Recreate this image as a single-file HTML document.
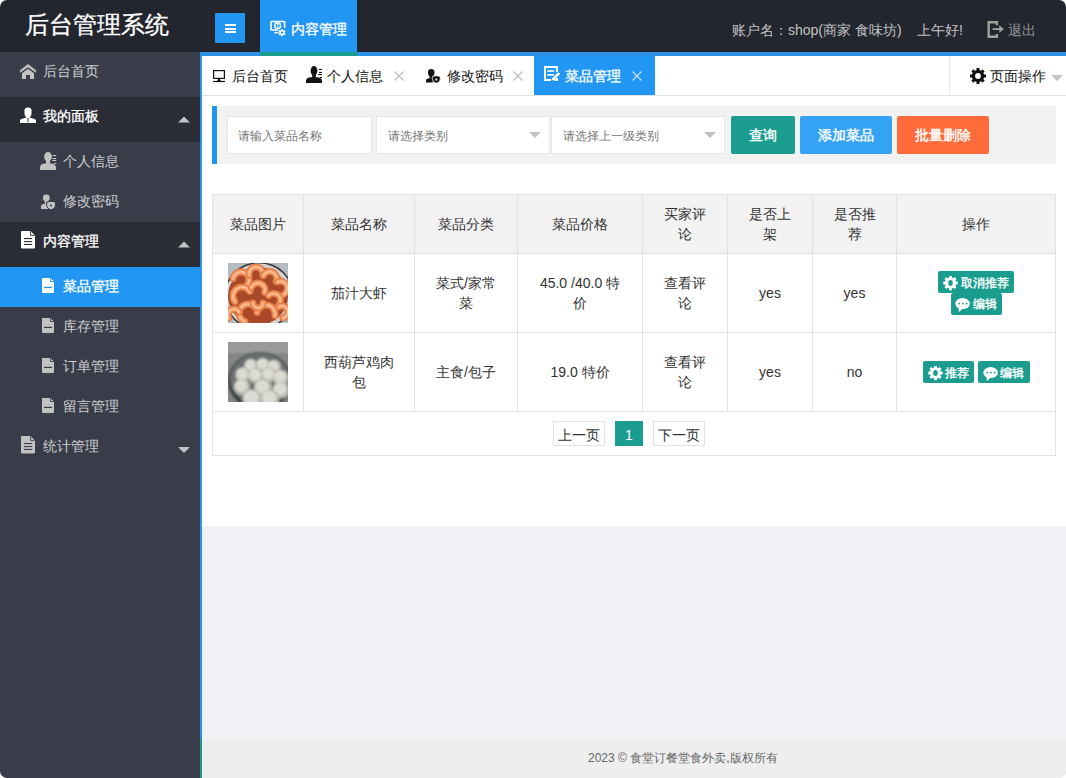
<!DOCTYPE html>
<html><head><meta charset="utf-8">
<style>
*{box-sizing:border-box;margin:0;padding:0}
html,body{width:1066px;height:778px;overflow:hidden;background:#fff;font-family:"Liberation Sans",sans-serif}
.app{position:absolute;left:0;top:0;width:1066px;height:778px;border-radius:7px;overflow:hidden;background:#fff}
.abs{position:absolute}
.t{position:absolute;white-space:nowrap;line-height:20px}
svg{position:absolute;display:block}
/* header */
#hdr{left:0;top:0;width:1066px;height:52px;background:#23262E}
#logo{left:25px;top:10px;font-size:24px;line-height:30px;color:#fff;-webkit-text-stroke:0.3px #fff}
#ham{left:215px;top:13px;width:30px;height:30px;background:#2196F3}
#htab{left:260px;top:0;width:97px;height:56px;background:#2196F3;border-bottom:4px solid #1A9D8F}
/* sidebar */
#side{left:0;top:52px;width:200px;height:726px;background:#393D49}
.grp{position:absolute;left:0;width:200px;height:45px;background:#2A2D35}
.sel{position:absolute;left:0;width:200px;height:40px;background:#2196F3}
.st{position:absolute;font-size:14px;line-height:20px;white-space:nowrap;color:rgba(255,255,255,.75)}
.sw{color:#fff;-webkit-text-stroke:0.3px #fff}
/* main */
#main{left:200px;top:52px;width:866px;height:726px;background:#F0F1F5;border-left:2px solid #2D93E6;border-top:4px solid #2D93E6}
#tabbar{left:202px;top:56px;width:864px;height:40px;background:#fff;border-bottom:1px solid #e2e2e2}
#atab{left:534px;top:56px;width:121px;height:39px;background:#2196F3}
.tt{position:absolute;font-size:14px;line-height:20px;white-space:nowrap;color:#111}
#content{left:202px;top:96px;width:864px;height:430px;background:#fff}
#search{left:212px;top:106px;width:844px;height:58px;background:#f2f2f2;border-left:5px solid #2196F3}
.inp{position:absolute;top:116px;height:38px;background:#fff;border:1px solid #e6e6e6}
.ph{position:absolute;font-size:12px;line-height:20px;color:#757575;white-space:nowrap}
.btn{position:absolute;top:116px;height:38px;border-radius:2px;color:#fff;font-size:14px;line-height:38px;text-align:center;white-space:nowrap;-webkit-text-stroke:0.4px #fff}
/* table */
#tbl{left:212px;top:194px;width:844px;height:262px;border:1px solid #e2e2e2;background:#fff}
#thead{left:213px;top:195px;width:842px;height:58px;background:#f2f2f2}
.hl{position:absolute;height:1px;background:#e2e2e2}
.vl{position:absolute;width:1px;background:#e2e2e2}
.c{position:absolute;font-size:14px;line-height:20px;color:#333;text-align:center;white-space:nowrap}
.xb{position:absolute;height:22px;background:#1A9D8F;border-radius:2px;color:#fff;font-size:12px;line-height:22px;white-space:nowrap}
.pg{position:absolute;top:421px;height:25px;border:1px solid #e2e2e2;background:#fff;font-size:14px;line-height:26px;text-align:center;color:#333;overflow:hidden}
#foot{left:202px;top:738px;width:864px;height:40px;background:#eee}
</style></head><body>
<div class="app">
<!-- header -->
<div id="hdr" class="abs"></div>
<div id="logo" class="abs">后台管理系统</div>
<div id="ham" class="abs"></div>
<div id="htab" class="abs"></div>
<div class="t" style="left:291px;top:19px;font-size:14px;color:#fff;-webkit-text-stroke:0.3px #fff">内容管理</div>
<div class="t" style="left:732px;top:20px;font-size:14px;color:#c2c2c2">账户名：shop(商家 食味坊)</div>
<div class="t" style="left:917px;top:20px;font-size:14px;color:#c2c2c2">上午好!</div>
<div class="t" style="left:1008px;top:20px;font-size:14px;color:#999">退出</div>

<!-- sidebar -->
<div id="side" class="abs"></div>
<div class="grp" style="top:97px"></div>
<div class="grp" style="top:222px"></div>
<div class="sel" style="top:267px"></div>
<div class="st" style="left:43px;top:61px">后台首页</div>
<div class="st sw" style="left:43px;top:106px">我的面板</div>
<div class="st" style="left:63px;top:151px">个人信息</div>
<div class="st" style="left:63px;top:191px">修改密码</div>
<div class="st sw" style="left:43px;top:231px">内容管理</div>
<div class="st sw" style="left:63px;top:276px">菜品管理</div>
<div class="st" style="left:63px;top:316px">库存管理</div>
<div class="st" style="left:63px;top:356px">订单管理</div>
<div class="st" style="left:63px;top:396px">留言管理</div>
<div class="st" style="left:43px;top:436px">统计管理</div>

<!-- main -->
<div id="main" class="abs"></div>
<div id="tealline" class="abs" style="left:260px;top:52px;width:97px;height:4px;background:#1A9D8F"></div>
<div id="tabbar" class="abs"></div>
<div class="abs" style="left:949px;top:56px;width:1px;height:39px;background:#e6e6e6"></div>
<div id="atab" class="abs"></div>
<div class="tt" style="left:232px;top:66px">后台首页</div>
<div class="tt" style="left:327px;top:66px">个人信息</div>
<div class="tt" style="left:447px;top:66px">修改密码</div>
<div class="tt" style="left:565px;top:66px;color:#fff;-webkit-text-stroke:0.3px #fff">菜品管理</div>
<div class="tt" style="left:990px;top:66px">页面操作</div>

<div id="content" class="abs"></div>
<div id="search" class="abs"></div>
<div class="inp" style="left:227px;width:145px"></div>
<div class="inp" style="left:376px;width:174px"></div>
<div class="inp" style="left:551px;width:174px"></div>
<div class="ph" style="left:238px;top:126px">请输入菜品名称</div>
<div class="ph" style="left:388px;top:126px">请选择类别</div>
<div class="ph" style="left:563px;top:126px">请选择上一级类别</div>
<div class="btn" style="left:731px;width:64px;background:#1A9D8F">查询</div>
<div class="btn" style="left:800px;width:92px;background:#35A3F5">添加菜品</div>
<div class="btn" style="left:897px;width:92px;background:#FF6B3B">批量删除</div>

<!-- table -->
<div id="tbl" class="abs"></div>
<div id="thead" class="abs"></div>
<div class="hl" style="left:213px;top:253px;width:842px"></div>
<div class="hl" style="left:213px;top:332px;width:842px"></div>
<div class="hl" style="left:213px;top:411px;width:842px"></div>
<div class="vl" style="left:303px;top:195px;height:216px"></div>
<div class="vl" style="left:414px;top:195px;height:216px"></div>
<div class="vl" style="left:517px;top:195px;height:216px"></div>
<div class="vl" style="left:642px;top:195px;height:216px"></div>
<div class="vl" style="left:727px;top:195px;height:216px"></div>
<div class="vl" style="left:812px;top:195px;height:216px"></div>
<div class="vl" style="left:896px;top:195px;height:216px"></div>

<div class="c" style="left:213px;width:90px;top:214px">菜品图片</div>
<div class="c" style="left:304px;width:110px;top:214px">菜品名称</div>
<div class="c" style="left:415px;width:102px;top:214px">菜品分类</div>
<div class="c" style="left:518px;width:124px;top:214px">菜品价格</div>
<div class="c" style="left:643px;width:84px;top:204px">买家评<br>论</div>
<div class="c" style="left:728px;width:84px;top:204px">是否上<br>架</div>
<div class="c" style="left:813px;width:83px;top:204px">是否推<br>荐</div>
<div class="c" style="left:897px;width:158px;top:214px">操作</div>

<div class="c" style="left:304px;width:110px;top:283px">茄汁大虾</div>
<div class="c" style="left:415px;width:102px;top:273px">菜式/家常<br>菜</div>
<div class="c" style="left:518px;width:124px;top:273px">45.0 /40.0 特<br>价</div>
<div class="c" style="left:643px;width:84px;top:273px">查看评<br>论</div>
<div class="c" style="left:728px;width:84px;top:283px">yes</div>
<div class="c" style="left:813px;width:83px;top:283px">yes</div>
<div class="xb" style="left:938px;top:271px;width:76px"></div>
<div class="xb" style="left:951px;top:293px;width:51px"></div>

<div class="c" style="left:304px;width:110px;top:352px">西葫芦鸡肉<br>包</div>
<div class="c" style="left:415px;width:102px;top:362px">主食/包子</div>
<div class="c" style="left:518px;width:124px;top:362px">19.0 特价</div>
<div class="c" style="left:643px;width:84px;top:352px">查看评<br>论</div>
<div class="c" style="left:728px;width:84px;top:362px">yes</div>
<div class="c" style="left:813px;width:83px;top:362px">no</div>
<div class="xb" style="left:923px;top:361px;width:51px"></div>
<div class="xb" style="left:978px;top:361px;width:52px"></div>

<div class="pg" style="left:553px;width:52px">上一页</div>
<div class="pg" style="left:615px;width:28px;background:#1A9D8F;border-color:#1A9D8F;color:#fff">1</div>
<div class="pg" style="left:653px;width:52px">下一页</div>

<div id="foot" class="abs"></div>
<div class="abs" style="left:200px;top:738px;width:2px;height:40px;background:#1A9D8F"></div>
<div class="t" style="left:588px;top:748px;font-size:12px;color:#666">2023 © 食堂订餐堂食外卖,版权所有</div>

<!-- ICONS -->
<svg style="left:225px;top:24px" width="11" height="9"><rect x="0" y="0" width="11" height="2" fill="#fff"/><rect x="0" y="4" width="11" height="2" fill="#fff"/><rect x="0" y="7" width="11" height="2" fill="#fff"/></svg>
<svg style="left:270px;top:20px" width="17" height="17"><path d="M8.3 10 L1.8 10 Q1 10 1 9.2 L1 2.3 Q1 1.5 1.8 1.5 L13.8 1.5 Q14.6 1.5 14.6 2.3 L14.6 8" fill="none" stroke="#fff" stroke-width="1.6"/><circle cx="7.6" cy="5.7" r="2.9" fill="none" stroke="#fff" stroke-width="1.4"/><path d="M8.3 3.4 Q6.4 5.7 8.3 8" fill="none" stroke="#fff" stroke-width="1"/><line x1="4.2" y1="12.6" x2="8.4" y2="12.6" stroke="#fff" stroke-width="1.4"/><path d="M11.20 9.92 L11.20 8.90 L12.80 8.90 L12.80 9.92 L13.92 10.57 L14.80 10.06 L15.60 11.44 L14.72 11.95 L14.72 13.25 L15.60 13.76 L14.80 15.14 L13.92 14.63 L12.80 15.28 L12.80 16.30 L11.20 16.30 L11.20 15.28 L10.08 14.63 L9.20 15.14 L8.40 13.76 L9.28 13.25 L9.28 11.95 L8.40 11.44 L9.20 10.06 L10.08 10.57 Z M13.20 12.60 A1.2 1.2 0 1 0 10.80 12.60 A1.2 1.2 0 1 0 13.20 12.60 Z" fill="#fff" fill-rule="evenodd"/></svg>
<svg style="left:987px;top:21px" width="18" height="17"><path d="M9.9 4.3 L9.9 1.2 L1.7 1.2 L1.7 15.8 L9.9 15.8 L9.9 12.9" fill="none" stroke="#a0a0a0" stroke-width="2.4"/><rect x="5.6" y="7.1" width="7.5" height="1.9" fill="#a0a0a0"/><path d="M12.3 4.3 L16.9 8.05 L12.3 12.1 Z" fill="#a0a0a0"/></svg>

<svg style="left:20px;top:64px" width="16" height="15"><path d="M0 6.3 L8 0 L16 6.3 L16 8.8 L8 3.3 L0 8.8 Z M2 9.3 L8 4.7 L14 9.3 L14 15 L10 15 L10 11 L6 11 L6 15 L2 15 Z" fill="#c2c2c2"/></svg>
<svg style="left:20px;top:107px" width="16" height="17"><path d="M4.4 3.8 Q4.4 0.4 8 0.4 Q11.6 0.4 11.6 3.8 L11.4 7.6 Q11 9.6 9.6 10.4 L9.6 11 L6.4 11 L6.4 10.4 Q5 9.6 4.6 7.6 Z" fill="#fff"/><path d="M0 16 L0 13.6 Q0 12.4 2 11.8 L6.6 10.6 L8 12 L9.4 10.6 L14 11.8 Q16 12.4 16 13.6 L16 16 Z" fill="#fff"/><path d="M8 11.5 L8 15.5" stroke="#2A2D35" stroke-width="0.9"/></svg>
<svg style="left:40px;top:152px" width="17" height="18"><ellipse cx="8" cy="4.7" rx="3.9" ry="4.7" fill="#c2c2c2"/><rect x="6" y="8" width="4" height="4" fill="#c2c2c2"/><path d="M0 18 L0 15.5 Q0 11.6 5 11.4 L11 11.4 Q16 11.6 16 15.5 L16 18 Z" fill="#c2c2c2"/><rect x="12.6" y="3" width="3.6" height="1.1" fill="#c2c2c2"/><rect x="12.6" y="6" width="3.6" height="1.1" fill="#c2c2c2"/><rect x="12.1" y="8" width="4.1" height="1.1" fill="#c2c2c2"/><rect x="14" y="10.9" width="2.2" height="1.1" fill="#c2c2c2"/></svg>
<svg style="left:40px;top:194px" width="17" height="17"><ellipse cx="6.3" cy="3.9" rx="3.4" ry="3.3" fill="#c2c2c2"/><rect x="4.8" y="6" width="3" height="4" fill="#c2c2c2"/><path d="M1 15 L1 12.5 Q1 10.3 4 10 L8.5 10 L8.5 15 Z" fill="#c2c2c2"/><path d="M6.7 8 Q11 6.6 15.4 8 L15.4 11 Q15.4 14.6 11 15.8 Q6.7 14.6 6.7 11 Z" fill="#c2c2c2" stroke="#393D49" stroke-width="1"/><circle cx="11" cy="11.4" r="1" fill="#393D49"/></svg>

<svg style="left:21px;top:231px" width="15" height="18"><path d="M0 1 Q0 0 1 0 L9.5 0 L14 4.5 L14 16.5 Q14 17.5 13 17.5 L1 17.5 Q0 17.5 0 16.5 Z" fill="#fff"/><path d="M9.6 0.3 L9.6 4.4 L13.8 4.4" fill="none" stroke="#2A2D35" stroke-width="0.9"/><rect x="3" y="7" width="8.2" height="1.1" fill="#2A2D35"/><rect x="3" y="10" width="8.2" height="1.1" fill="#2A2D35"/><rect x="3" y="12.9" width="8.2" height="1.1" fill="#2A2D35"/></svg>
<svg style="left:21px;top:436px" width="15" height="18"><path d="M0 1 Q0 0 1 0 L9.5 0 L14 4.5 L14 16.5 Q14 17.5 13 17.5 L1 17.5 Q0 17.5 0 16.5 Z" fill="#c2c2c2"/><path d="M9.6 0.3 L9.6 4.4 L13.8 4.4" fill="none" stroke="#393D49" stroke-width="0.9"/><rect x="3" y="7" width="8.2" height="1.1" fill="#393D49"/><rect x="3" y="10" width="8.2" height="1.1" fill="#393D49"/><rect x="3" y="12.9" width="8.2" height="1.1" fill="#393D49"/></svg>
<svg style="left:42px;top:278px" width="13" height="15"><path d="M0 0.8 Q0 0 0.8 0 L8.4 0 L12 3.6 L12 14.2 Q12 15 11.2 15 L0.8 15 Q0 15 0 14.2 Z" fill="#fff"/><path d="M8.5 0.3 L8.5 3.5 L11.8 3.5" fill="none" stroke="#2196F3" stroke-width="0.9"/><rect x="2" y="8.8" width="8" height="1.2" fill="#2196F3"/></svg>
<svg style="left:42px;top:318px" width="13" height="15"><path d="M0 0.8 Q0 0 0.8 0 L8.4 0 L12 3.6 L12 14.2 Q12 15 11.2 15 L0.8 15 Q0 15 0 14.2 Z" fill="#c2c2c2"/><path d="M8.5 0.3 L8.5 3.5 L11.8 3.5" fill="none" stroke="#393D49" stroke-width="0.9"/><rect x="2" y="8.8" width="8" height="1.2" fill="#393D49"/></svg>
<svg style="left:42px;top:358px" width="13" height="15"><path d="M0 0.8 Q0 0 0.8 0 L8.4 0 L12 3.6 L12 14.2 Q12 15 11.2 15 L0.8 15 Q0 15 0 14.2 Z" fill="#c2c2c2"/><path d="M8.5 0.3 L8.5 3.5 L11.8 3.5" fill="none" stroke="#393D49" stroke-width="0.9"/><rect x="2" y="8.8" width="8" height="1.2" fill="#393D49"/></svg>
<svg style="left:42px;top:398px" width="13" height="15"><path d="M0 0.8 Q0 0 0.8 0 L8.4 0 L12 3.6 L12 14.2 Q12 15 11.2 15 L0.8 15 Q0 15 0 14.2 Z" fill="#c2c2c2"/><path d="M8.5 0.3 L8.5 3.5 L11.8 3.5" fill="none" stroke="#393D49" stroke-width="0.9"/><rect x="2" y="8.8" width="8" height="1.2" fill="#393D49"/></svg>
<svg style="left:178px;top:116px" width="12" height="7"><path d="M0 6.6 L6 0.4 L12 6.6 Z" fill="#c2c2c2"/></svg>
<svg style="left:178px;top:241px" width="12" height="7"><path d="M0 6.6 L6 0.4 L12 6.6 Z" fill="#c2c2c2"/></svg>
<svg style="left:178px;top:447px" width="12" height="7"><path d="M0 0 L12 0 L6 6 Z" fill="#c2c2c2"/></svg>

<svg style="left:213px;top:70px" width="12" height="13"><rect x="0.6" y="0.6" width="10.8" height="7.8" fill="none" stroke="#111" stroke-width="1.2"/><path d="M5 8.8 Q5.4 10.4 3.8 11 L8.2 11 Q6.6 10.4 7 8.8 Z" fill="#111"/><rect x="0" y="10.9" width="12" height="1.2" fill="#111"/></svg>
<svg style="left:306px;top:66px" width="17" height="17"><ellipse cx="8" cy="4.8" rx="3.4" ry="4.8" fill="#111"/><rect x="6.2" y="8" width="3.6" height="4" fill="#111"/><path d="M0 17 L0 15 Q0 11.4 5 11.2 L11 11.2 Q16 11.4 16 15 L16 17 Z" fill="#111"/><rect x="13" y="2.9" width="3" height="1.1" fill="#111"/><rect x="13" y="5.9" width="3" height="1.1" fill="#111"/><rect x="12.2" y="8" width="3.8" height="1.1" fill="#111"/><rect x="14" y="10.9" width="2" height="1.1" fill="#111"/></svg>
<svg style="left:426px;top:69px" width="15" height="15"><path d="M2 3.2 Q2 0 5.25 0 Q8.5 0 8.5 3.2 L8.3 5.2 Q8 6.6 7 7.2 L7 9.6 L3.5 9.6 L3.5 7.2 Q2.5 6.6 2.2 5.2 Z" fill="#111"/><path d="M0 13.6 L0 11.6 Q0 9.5 2.6 9.3 L6.8 9.3 L6.8 13.6 Z" fill="#111"/><path d="M6.4 7.4 Q10.2 6.2 14.2 7.4 L14.2 10.2 Q14.2 13.2 10.3 14.2 Q6.4 13.2 6.4 10.2 Z" fill="#111" stroke="#fff" stroke-width="0.7"/><circle cx="10.3" cy="10.6" r="1.1" fill="#fff"/></svg>
<svg style="left:544px;top:66px" width="17" height="16"><path d="M12.9 6 L12.9 1 L1 1 L1 14 L7.2 14" fill="none" stroke="#fff" stroke-width="2"/><path d="M10.5 14 L12.9 14 L12.9 12" fill="none" stroke="#fff" stroke-width="2"/><rect x="3.3" y="4.2" width="6.8" height="1.6" fill="#fff"/><rect x="3.3" y="8.1" width="6.8" height="1.6" fill="#fff"/><path d="M8.4 13.8 L15.2 7" stroke="#fff" stroke-width="2.6"/></svg>
<svg style="left:394px;top:71px" width="10" height="10"><path d="M0.5 0.5 L9.5 9.5 M9.5 0.5 L0.5 9.5" stroke="#bbb" stroke-width="1.1"/></svg>
<svg style="left:513px;top:71px" width="10" height="10"><path d="M0.5 0.5 L9.5 9.5 M9.5 0.5 L0.5 9.5" stroke="#bbb" stroke-width="1.1"/></svg>
<svg style="left:632px;top:71px" width="10" height="10"><path d="M0.5 0.5 L9.5 9.5 M9.5 0.5 L0.5 9.5" stroke="rgba(255,255,255,.75)" stroke-width="1.1"/></svg>
<svg style="left:970px;top:68px" width="16" height="16"><path d="M6.50 1.98 L6.50 0.00 L9.50 0.00 L9.50 1.98 L11.19 2.69 L12.60 1.28 L14.72 3.40 L13.31 4.81 L14.02 6.50 L16.00 6.50 L16.00 9.50 L14.02 9.50 L13.31 11.19 L14.72 12.60 L12.60 14.72 L11.19 13.31 L9.50 14.02 L9.50 16.00 L6.50 16.00 L6.50 14.02 L4.81 13.31 L3.40 14.72 L1.28 12.60 L2.69 11.19 L1.98 9.50 L0.00 9.50 L0.00 6.50 L1.98 6.50 L2.69 4.81 L1.28 3.40 L3.40 1.28 L4.81 2.69 Z M10.90 8.00 A2.9 2.9 0 1 0 5.10 8.00 A2.9 2.9 0 1 0 10.90 8.00 Z" fill="#111" fill-rule="evenodd"/></svg>
<svg style="left:1051px;top:75px" width="12" height="7"><path d="M0 0 L12 0 L6 6 Z" fill="#c2c2c2"/></svg>
<svg style="left:529px;top:132px" width="12" height="7"><path d="M0 0 L12 0 L6 6 Z" fill="#c2c2c2"/></svg>
<svg style="left:704px;top:132px" width="12" height="7"><path d="M0 0 L12 0 L6 6 Z" fill="#c2c2c2"/></svg>
<svg style="left:943px;top:276px" width="15" height="15"><path d="M6.10 1.58 L6.10 -0.20 L8.90 -0.20 L8.90 1.58 L10.34 2.18 L11.60 0.92 L13.58 2.90 L12.32 4.16 L12.92 5.60 L14.70 5.60 L14.70 8.40 L12.92 8.40 L12.32 9.84 L13.58 11.10 L11.60 13.08 L10.34 11.82 L8.90 12.42 L8.90 14.20 L6.10 14.20 L6.10 12.42 L4.66 11.82 L3.40 13.08 L1.42 11.10 L2.68 9.84 L2.08 8.40 L0.30 8.40 L0.30 5.60 L2.08 5.60 L2.68 4.16 L1.42 2.90 L3.40 0.92 L4.66 2.18 Z M9.80 7.00 A2.3 3.0 0 1 0 5.20 7.00 A2.3 3.0 0 1 0 9.80 7.00 Z" fill="#fff" fill-rule="evenodd"/></svg>
<svg style="left:955px;top:298px" width="16" height="15"><ellipse cx="7.6" cy="5.6" rx="7.3" ry="5.5" fill="#fff"/><path d="M3.6 9 L3.8 14 L8 10.4 Z" fill="#fff"/><circle cx="4.1" cy="5.6" r="0.95" fill="#1A9D8F"/><circle cx="7.8" cy="5.6" r="0.95" fill="#1A9D8F"/><circle cx="11.5" cy="5.6" r="0.95" fill="#1A9D8F"/></svg>
<svg style="left:928px;top:366px" width="15" height="15"><path d="M6.10 1.58 L6.10 -0.20 L8.90 -0.20 L8.90 1.58 L10.34 2.18 L11.60 0.92 L13.58 2.90 L12.32 4.16 L12.92 5.60 L14.70 5.60 L14.70 8.40 L12.92 8.40 L12.32 9.84 L13.58 11.10 L11.60 13.08 L10.34 11.82 L8.90 12.42 L8.90 14.20 L6.10 14.20 L6.10 12.42 L4.66 11.82 L3.40 13.08 L1.42 11.10 L2.68 9.84 L2.08 8.40 L0.30 8.40 L0.30 5.60 L2.08 5.60 L2.68 4.16 L1.42 2.90 L3.40 0.92 L4.66 2.18 Z M9.80 7.00 A2.3 3.0 0 1 0 5.20 7.00 A2.3 3.0 0 1 0 9.80 7.00 Z" fill="#fff" fill-rule="evenodd"/></svg>
<svg style="left:983px;top:367px" width="16" height="15"><ellipse cx="7.6" cy="5.6" rx="7.3" ry="5.5" fill="#fff"/><path d="M3.6 9 L3.8 14 L8 10.4 Z" fill="#fff"/><circle cx="4.1" cy="5.6" r="0.95" fill="#1A9D8F"/><circle cx="7.8" cy="5.6" r="0.95" fill="#1A9D8F"/><circle cx="11.5" cy="5.6" r="0.95" fill="#1A9D8F"/></svg>
<div class="t" style="left:961px;top:273px;font-size:12px;color:#fff;-webkit-text-stroke:0.35px #fff">取消推荐</div>
<div class="t" style="left:973px;top:294px;font-size:12px;color:#fff;-webkit-text-stroke:0.35px #fff">编辑</div>
<div class="t" style="left:945px;top:363px;font-size:12px;color:#fff;-webkit-text-stroke:0.35px #fff">推荐</div>
<div class="t" style="left:1000px;top:363px;font-size:12px;color:#fff;-webkit-text-stroke:0.35px #fff">编辑</div>
<!-- /ICONS -->
<!-- FOOD -->
<svg style="left:228px;top:263px" width="60" height="60" viewBox="0 0 60 60">
<defs><filter id="bl" x="0" y="0" width="1" height="1"><feGaussianBlur stdDeviation="0.7"/></filter><clipPath id="cp1"><rect width="60" height="60"/></clipPath></defs>
<g filter="url(#bl)" clip-path="url(#cp1)">
<rect x="-5" y="-5" width="70" height="70" fill="#b3bcc0"/>
<ellipse cx="31" cy="33" rx="35" ry="34" fill="#33373a"/>
<ellipse cx="31" cy="33" rx="33.5" ry="32.5" fill="#d5d0ca"/>
<ellipse cx="30" cy="33" rx="30" ry="29" fill="#a9482a"/>
<path d="M5.1 15.6 A8 8 0 1 1 19.1 22.1" fill="none" stroke="#e27a45" stroke-width="7" stroke-linecap="round"/>
<path d="M5.1 15.6 A8 8 0 1 1 19.1 22.1" fill="none" stroke="#f39a63" stroke-width="4.5" stroke-linecap="round"/>
<path d="M5.1 15.6 A8 8 0 1 1 19.1 22.1" fill="none" stroke="#fbc39b" stroke-width="1.6" stroke-linecap="round"/>
<path d="M21.1 12.2 A7 7 0 1 1 34.9 12.2" fill="none" stroke="#e27a45" stroke-width="7" stroke-linecap="round"/>
<path d="M21.1 12.2 A7 7 0 1 1 34.9 12.2" fill="none" stroke="#f39a63" stroke-width="4.5" stroke-linecap="round"/>
<path d="M21.1 12.2 A7 7 0 1 1 34.9 12.2" fill="none" stroke="#fbc39b" stroke-width="1.6" stroke-linecap="round"/>
<path d="M35.4 12.6 A7 7 0 1 1 48.1 18.5" fill="none" stroke="#e27a45" stroke-width="7" stroke-linecap="round"/>
<path d="M35.4 12.6 A7 7 0 1 1 48.1 18.5" fill="none" stroke="#f39a63" stroke-width="4.5" stroke-linecap="round"/>
<path d="M35.4 12.6 A7 7 0 1 1 48.1 18.5" fill="none" stroke="#fbc39b" stroke-width="1.6" stroke-linecap="round"/>
<path d="M49.5 18.9 A7 7 0 1 1 55.4 31.6" fill="none" stroke="#e27a45" stroke-width="7" stroke-linecap="round"/>
<path d="M49.5 18.9 A7 7 0 1 1 55.4 31.6" fill="none" stroke="#f39a63" stroke-width="4.5" stroke-linecap="round"/>
<path d="M49.5 18.9 A7 7 0 1 1 55.4 31.6" fill="none" stroke="#fbc39b" stroke-width="1.6" stroke-linecap="round"/>
<path d="M7.1 38.8 A9 9 0 1 1 21.8 28.5" fill="none" stroke="#e27a45" stroke-width="7" stroke-linecap="round"/>
<path d="M7.1 38.8 A9 9 0 1 1 21.8 28.5" fill="none" stroke="#f39a63" stroke-width="4.5" stroke-linecap="round"/>
<path d="M7.1 38.8 A9 9 0 1 1 21.8 28.5" fill="none" stroke="#fbc39b" stroke-width="1.6" stroke-linecap="round"/>
<path d="M23.4 24.6 A7 7 0 1 1 36.6 29.4" fill="none" stroke="#e27a45" stroke-width="7" stroke-linecap="round"/>
<path d="M23.4 24.6 A7 7 0 1 1 36.6 29.4" fill="none" stroke="#f39a63" stroke-width="4.5" stroke-linecap="round"/>
<path d="M23.4 24.6 A7 7 0 1 1 36.6 29.4" fill="none" stroke="#fbc39b" stroke-width="1.6" stroke-linecap="round"/>
<path d="M40.6 32.5 A7 7 0 1 1 50.5 42.4" fill="none" stroke="#e27a45" stroke-width="7" stroke-linecap="round"/>
<path d="M40.6 32.5 A7 7 0 1 1 50.5 42.4" fill="none" stroke="#f39a63" stroke-width="4.5" stroke-linecap="round"/>
<path d="M40.6 32.5 A7 7 0 1 1 50.5 42.4" fill="none" stroke="#fbc39b" stroke-width="1.6" stroke-linecap="round"/>
<path d="M16.9 58.5 A9 9 0 1 1 26.9 44.2" fill="none" stroke="#e27a45" stroke-width="7" stroke-linecap="round"/>
<path d="M16.9 58.5 A9 9 0 1 1 26.9 44.2" fill="none" stroke="#f39a63" stroke-width="4.5" stroke-linecap="round"/>
<path d="M16.9 58.5 A9 9 0 1 1 26.9 44.2" fill="none" stroke="#fbc39b" stroke-width="1.6" stroke-linecap="round"/>
<path d="M29.1 49.4 A9 9 0 1 1 46.9 52.6" fill="none" stroke="#e27a45" stroke-width="7" stroke-linecap="round"/>
<path d="M29.1 49.4 A9 9 0 1 1 46.9 52.6" fill="none" stroke="#f39a63" stroke-width="4.5" stroke-linecap="round"/>
<path d="M29.1 49.4 A9 9 0 1 1 46.9 52.6" fill="none" stroke="#fbc39b" stroke-width="1.6" stroke-linecap="round"/>
<path d="M51.0 43.8 A6 6 0 1 1 55.0 54.9" fill="none" stroke="#e27a45" stroke-width="7" stroke-linecap="round"/>
<path d="M51.0 43.8 A6 6 0 1 1 55.0 54.9" fill="none" stroke="#f39a63" stroke-width="4.5" stroke-linecap="round"/>
<path d="M51.0 43.8 A6 6 0 1 1 55.0 54.9" fill="none" stroke="#fbc39b" stroke-width="1.6" stroke-linecap="round"/>
<path d="M0.8 55.0 A6 6 0 1 1 11.2 49.0" fill="none" stroke="#e27a45" stroke-width="7" stroke-linecap="round"/>
<path d="M0.8 55.0 A6 6 0 1 1 11.2 49.0" fill="none" stroke="#f39a63" stroke-width="4.5" stroke-linecap="round"/>
<path d="M0.8 55.0 A6 6 0 1 1 11.2 49.0" fill="none" stroke="#fbc39b" stroke-width="1.6" stroke-linecap="round"/>
<path d="M35.0 40.0 A5 5 0 1 1 25.0 40.0" fill="none" stroke="#e27a45" stroke-width="7" stroke-linecap="round"/>
<path d="M35.0 40.0 A5 5 0 1 1 25.0 40.0" fill="none" stroke="#f39a63" stroke-width="4.5" stroke-linecap="round"/>
<path d="M35.0 40.0 A5 5 0 1 1 25.0 40.0" fill="none" stroke="#fbc39b" stroke-width="1.6" stroke-linecap="round"/>
</g></svg>
<svg style="left:228px;top:342px" width="60" height="60" viewBox="0 0 60 60">
<defs><filter id="bl2" x="0" y="0" width="1" height="1"><feGaussianBlur stdDeviation="0.8"/></filter><clipPath id="cp2"><rect width="60" height="60"/></clipPath></defs>
<g filter="url(#bl2)" clip-path="url(#cp2)">
<rect x="-5" y="-5" width="70" height="70" fill="#858584"/>
<rect x="-5" y="-5" width="70" height="16" fill="#9a9a98"/>
<ellipse cx="32" cy="39" rx="32" ry="29" fill="#353c40"/>
<ellipse cx="32" cy="37" rx="30" ry="26" fill="#6a6f71"/>
<circle cx="23" cy="24" r="7" fill="#b9b8ae"/>
<circle cx="22.2" cy="22.8" r="5.2" fill="#dcdbd3"/>
<circle cx="35" cy="23" r="7" fill="#b9b8ae"/>
<circle cx="34.2" cy="21.8" r="5.2" fill="#dcdbd3"/>
<circle cx="46" cy="25" r="7.2" fill="#b9b8ae"/>
<circle cx="45.2" cy="23.8" r="5.4" fill="#dcdbd3"/>
<circle cx="15" cy="33" r="7.8" fill="#b9b8ae"/>
<circle cx="14.2" cy="31.8" r="5.8" fill="#dcdbd3"/>
<circle cx="28" cy="34" r="7.8" fill="#b9b8ae"/>
<circle cx="27.2" cy="32.8" r="5.8" fill="#dcdbd3"/>
<circle cx="41" cy="33" r="7.8" fill="#b9b8ae"/>
<circle cx="40.2" cy="31.8" r="5.8" fill="#dcdbd3"/>
<circle cx="53" cy="36" r="8" fill="#b9b8ae"/>
<circle cx="52.2" cy="34.8" r="6.0" fill="#dcdbd3"/>
<circle cx="14" cy="45" r="8.2" fill="#b9b8ae"/>
<circle cx="13.2" cy="43.8" r="6.1" fill="#dcdbd3"/>
<circle cx="35" cy="46" r="9" fill="#b9b8ae"/>
<circle cx="34.2" cy="44.8" r="6.8" fill="#dcdbd3"/>
<circle cx="53" cy="48" r="8.6" fill="#b9b8ae"/>
<circle cx="52.2" cy="46.8" r="6.4" fill="#dcdbd3"/>
<circle cx="24" cy="57" r="9.8" fill="#b9b8ae"/>
<circle cx="23.2" cy="55.8" r="7.4" fill="#dcdbd3"/>
<circle cx="42" cy="57" r="9.5" fill="#b9b8ae"/>
<circle cx="41.2" cy="55.8" r="7.1" fill="#dcdbd3"/>
</g></svg>
<!-- /FOOD -->



</div>
</body></html>
